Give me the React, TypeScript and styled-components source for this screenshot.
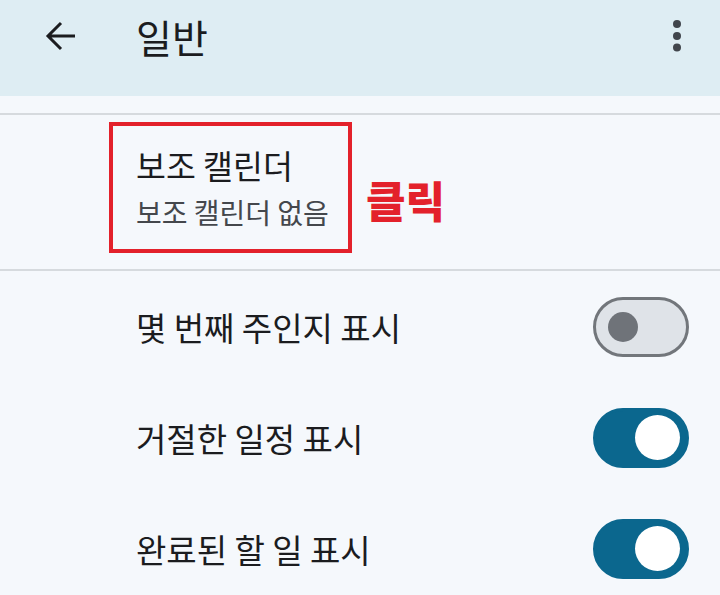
import React, { useState } from 'react';
import styled, { createGlobalStyle } from 'styled-components';

const GlobalStyle = createGlobalStyle`
  body {
    margin: 0;
    background: #f5f8fc;
    font-family: 'Noto Sans CJK KR', 'Noto Sans', sans-serif;
  }
`;

const Page = styled.div`
  width: 720px;
  height: 595px;
  overflow: hidden;
  background: #f5f8fc;
  color: #1b1c1f;
`;

// Top app bar with the back arrow, title and overflow menu
const Header = styled.header`
  background: #deedf3;
  padding-bottom: 24px;
`;

const Toolbar = styled.div`
  height: 72px;
  display: flex;
  align-items: center;
  padding: 0 38px 0 45px;
`;

const IconButton = styled.button`
  display: flex;
  align-items: center;
  justify-content: center;
  padding: 0;
  border: none;
  background: none;
  cursor: pointer;
  color: #1b1c1f;
`;

const Title = styled.h1`
  flex: 1;
  margin: 0 0 0 60px;
  font-size: 39px;
  font-weight: 400;
  line-height: 44px;
`;

const Spacer = styled.div`
  height: 17px;
`;

const Divider = styled.div`
  height: 2px;
  background: #d6dade;
`;

// Secondary calendar item with the red annotation box
const CalendarItem = styled.div`
  display: flex;
  align-items: flex-start;
  height: 154px;
  padding-left: 109px;
`;

const Highlight = styled.div`
  box-sizing: border-box;
  width: 243px;
  height: 131px;
  margin-top: 7px;
  padding: 18px 0 0 23px;
  border: 4px solid #e3212b;
`;

const ItemTitle = styled.div`
  font-size: 32.5px;
  line-height: 42px;
`;

const ItemSub = styled.div`
  margin-top: 8px;
  font-size: 28px;
  line-height: 36px;
  color: #44474c;
`;

const ClickLabel = styled.span`
  margin: 59px 0 0 14px;
  font-size: 43px;
  line-height: 50px;
  font-weight: 900;
  color: #e3212b;
`;

const SwitchRow = styled.div`
  display: flex;
  align-items: center;
  justify-content: space-between;
  height: 111px;
  padding: 0 31px 0 136px;
  font-size: 33px;
`;

const Track = styled.button<{ $on: boolean }>`
  box-sizing: border-box;
  display: flex;
  align-items: center;
  justify-content: ${(p) => (p.$on ? 'flex-end' : 'flex-start')};
  width: 96px;
  height: 60px;
  padding: ${(p) => (p.$on ? '0 6px' : '0 12px')};
  border-radius: 30px;
  border: 3px solid ${(p) => (p.$on ? '#0b678e' : '#72767b')};
  background: ${(p) => (p.$on ? '#0b678e' : '#dfe3e8')};
  cursor: pointer;
`;

const Knob = styled.span<{ $on: boolean }>`
  display: block;
  width: ${(p) => (p.$on ? '45px' : '30px')};
  height: ${(p) => (p.$on ? '45px' : '30px')};
  border-radius: 50%;
  background: ${(p) => (p.$on ? '#ffffff' : '#6f7379')};
`;

function Switch({ on, onToggle }: { on: boolean; onToggle: () => void }) {
  return (
    <Track $on={on} onClick={onToggle} aria-pressed={on}>
      <Knob $on={on} />
    </Track>
  );
}

export default function App() {
  const [weekNum, setWeekNum] = useState(false);
  const [declined, setDeclined] = useState(true);
  const [doneTasks, setDoneTasks] = useState(true);

  return (
    <Page>
      <GlobalStyle />
      <Header>
        <Toolbar>
          <IconButton aria-label="뒤로">
            <svg width="31" height="30" viewBox="0 0 31 30" fill="none">
              <path d="M30 15H3.5M16 2L3 15l13 13" stroke="#1b1c1f" strokeWidth="3" />
            </svg>
          </IconButton>
          <Title>일반</Title>
          <IconButton aria-label="더보기">
            <svg width="10" height="34" viewBox="0 0 10 34">
              <circle cx="5" cy="5" r="4" fill="#41464c" />
              <circle cx="5" cy="17" r="4" fill="#41464c" />
              <circle cx="5" cy="28.5" r="4" fill="#41464c" />
            </svg>
          </IconButton>
        </Toolbar>
      </Header>
      <Spacer />
      <Divider />
      <CalendarItem>
        <Highlight>
          <ItemTitle>보조 캘린더</ItemTitle>
          <ItemSub>보조 캘린더 없음</ItemSub>
        </Highlight>
        <ClickLabel>클릭</ClickLabel>
      </CalendarItem>
      <Divider />
      <SwitchRow>
        <span>몇 번째 주인지 표시</span>
        <Switch on={weekNum} onToggle={() => setWeekNum(!weekNum)} />
      </SwitchRow>
      <SwitchRow>
        <span>거절한 일정 표시</span>
        <Switch on={declined} onToggle={() => setDeclined(!declined)} />
      </SwitchRow>
      <SwitchRow>
        <span>완료된 할 일 표시</span>
        <Switch on={doneTasks} onToggle={() => setDoneTasks(!doneTasks)} />
      </SwitchRow>
    </Page>
  );
}
